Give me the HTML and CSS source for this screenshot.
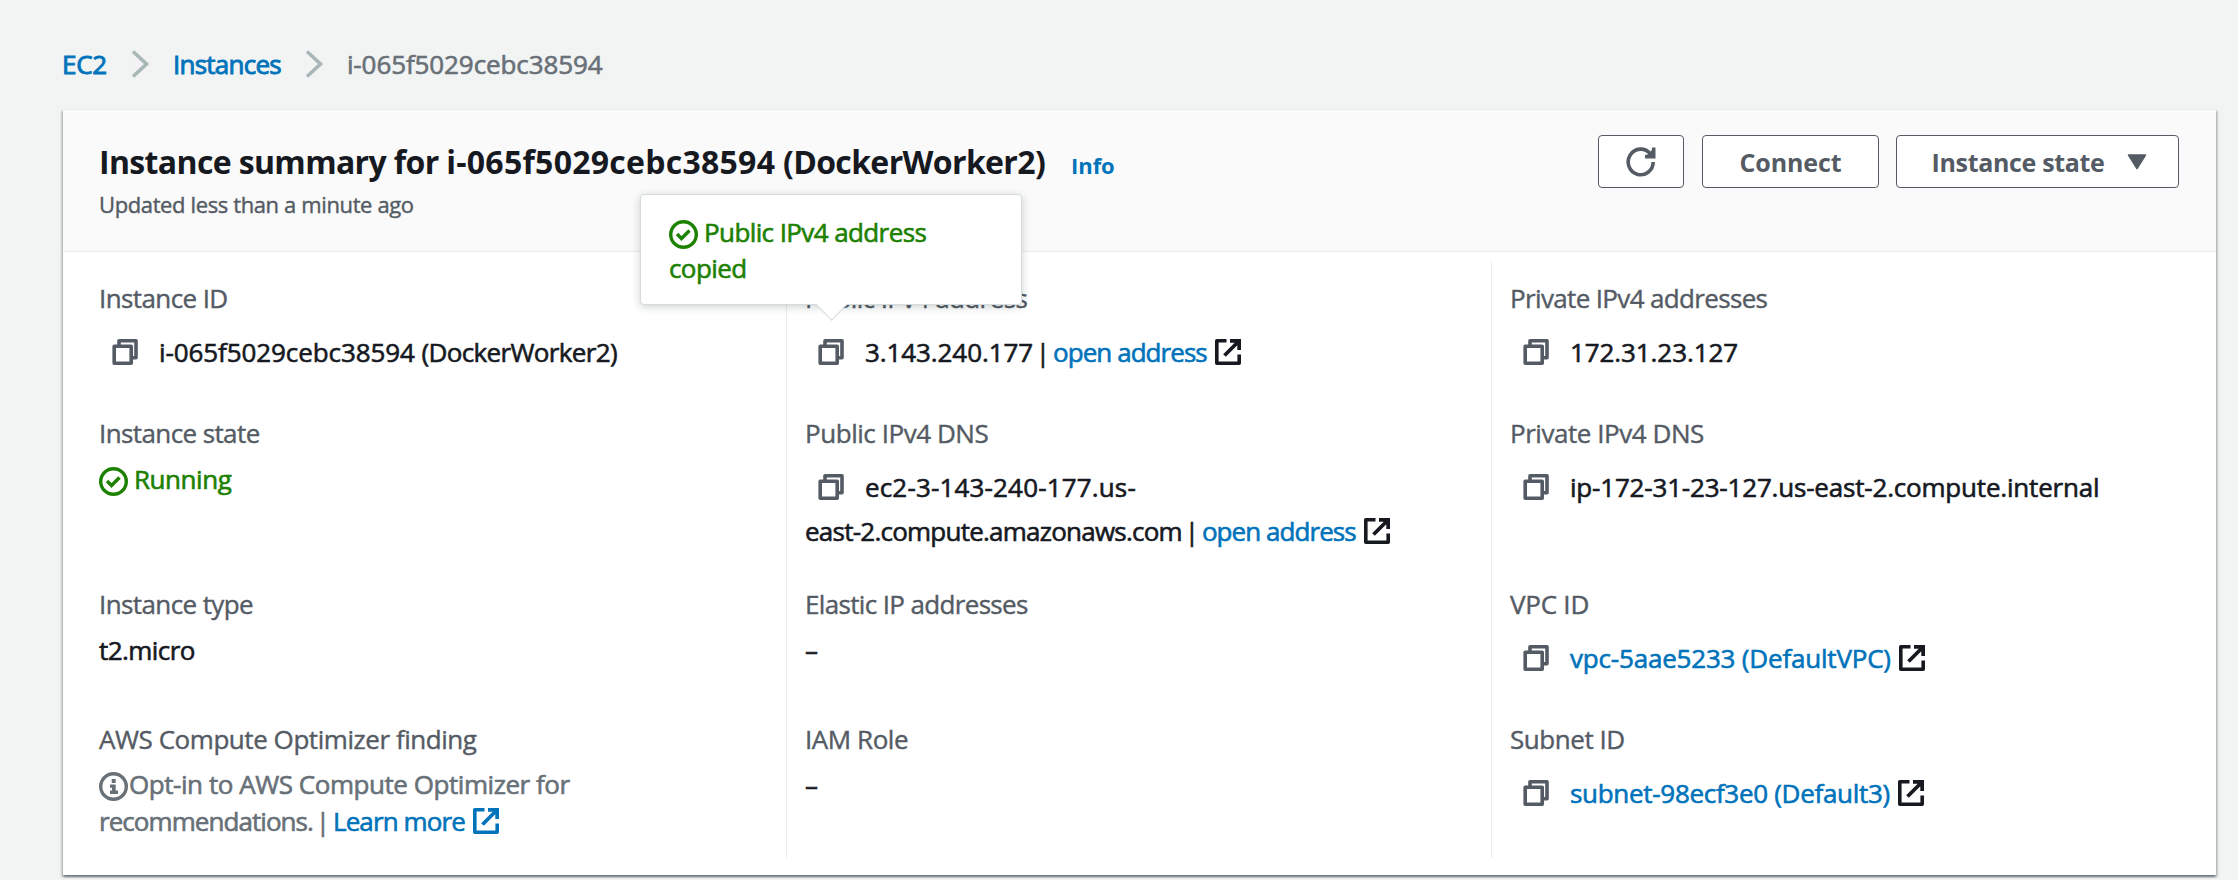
FILE: index.html
```html
<!DOCTYPE html>
<html lang="en">
<head>
<meta charset="utf-8">
<title>Instance summary</title>
<link rel="stylesheet" href="styles.css">
</head>
<body>
<svg class="defs" aria-hidden="true">
  <symbol id="copy" viewBox="0 0 26 26"><path d="M7 6.500V1.800h17v17h-4.500M2.200 7.200h17v17h-17z" fill="none" stroke="currentColor" stroke-width="3.600" stroke-linejoin="round"/></symbol>
  <symbol id="external" viewBox="0 0 26 26"><path d="M11.500 1.800H1.800v22.400h22.400V15.500" fill="none" stroke="currentColor" stroke-width="3.600" stroke-linejoin="round"/><path d="M15 1.800h9.200V11M9.500 16.500 23.500 2.500" fill="none" stroke="currentColor" stroke-width="3.800"/></symbol>
  <symbol id="check" viewBox="0 0 29 29"><circle cx="14.500" cy="14.500" r="12.800" fill="none" stroke="currentColor" stroke-width="3.400"/><path d="M8 14l4.500 4.500 8-8" fill="none" stroke="currentColor" stroke-width="3.400"/></symbol>
  <symbol id="info" viewBox="0 0 29 29"><circle cx="14.500" cy="14.500" r="12.800" fill="none" stroke="currentColor" stroke-width="3.400"/><path d="M12.700 7h4v4h-4zM11 12.500h5.700v6H19v3.500h-8v-3.500h2v-2.700h-2z" fill="currentColor"/></symbol>
  <symbol id="chevron" viewBox="0 0 18 28"><path d="M2 1.500 15.500 14 2 26.500" fill="none" stroke="currentColor" stroke-width="3.600"/></symbol>
</svg>
<nav class="crumbs">
  <a class="ls25">EC2</a><svg class="chev"><use href="#chevron"/></svg><a class="ls75">Instances</a><svg class="chev"><use href="#chevron"/></svg><span>i-065f5029cebc38594</span>
</nav>
<main class="card">
  <header class="head">
    <div class="heading">
      <h1>Instance summary for <span class="title-id">i-065f5029cebc38594</span> (DockerWorker2)<a class="info">Info</a></h1>
      <p class="updated">Updated less than a minute ago</p>
    </div>
    <div class="actions">
      <button class="btn refresh"><svg viewBox="0 0 30 30"><path d="M27.200 15A12.500 12.800 0 1 1 24.200 6.600" fill="none" stroke="currentColor" stroke-width="3.600"/><path d="M27.700.500V9.600H19" fill="none" stroke="currentColor" stroke-width="3.600"/><path d="M27 2v8h-8z" fill="currentColor"/></svg></button>
      <button class="btn connect">Connect</button>
      <button class="btn state">Instance state<svg class="caret" viewBox="0 0 20 16"><path d="M1.500 1h17L10 14.500z" fill="currentColor" stroke="currentColor" stroke-width="1.500" stroke-linejoin="round"/></svg></button>
    </div>
  </header>
  <div class="cols">
    <section class="col">
      <div class="field"><div class="label ls60">Instance ID</div>
        <div class="value copyable"><svg class="copy"><use href="#copy"/></svg><span class="ls10">i-065f5029cebc38594 </span><span class="ls65">(DockerWorker2)</span></div></div>
      <div class="field"><div class="label ls60">Instance state</div>
        <div class="value ok"><svg class="status"><use href="#check"/></svg><span class="after ls45">Running</span></div></div>
      <div class="field"><div class="label ls60">Instance type</div><div class="value ls55">t2.micro</div></div>
      <div class="field"><div class="label ls45">AWS Compute Optimizer finding</div>
        <div class="value muted"><svg class="status"><use href="#info"/></svg><span class="ls45">Opt-in to AWS Compute Optimizer for</span><br><span class="ls95">recommendations.</span><span class="pipe">|</span><a class="ls90">Learn more</a><svg class="ext"><use href="#external"/></svg></div></div>
    </section>
    <section class="col">
      <div class="field"><div class="label ls60">Public IPv4 address</div>
        <div class="value copyable"><svg class="copy"><use href="#copy"/></svg><span class="ls10">3.143.240.177</span><span class="pipe">|</span><a class="ls95">open address</a><svg class="ext"><use href="#external"/></svg></div>
        <div class="tooltip"><svg class="status"><use href="#check"/></svg><span class="after ls60">Public IPv4 address copied</span></div></div>
      <div class="field"><div class="label ls45">Public IPv4 DNS</div>
        <div class="value copyable"><svg class="copy"><use href="#copy"/></svg><span class="wide">ec2-3-143-240-177.us-</span><br><span class="ls75">east-2.compute.amazonaws.com</span><span class="pipe">|</span><a class="ls95">open address</a><svg class="ext"><use href="#external"/></svg></div></div>
      <div class="field"><div class="label ls65">Elastic IP addresses</div><div class="value">–</div></div>
      <div class="field"><div class="label ls45">IAM Role</div><div class="value">–</div></div>
    </section>
    <section class="col">
      <div class="field"><div class="label ls65">Private IPv4 addresses</div>
        <div class="value copyable"><svg class="copy"><use href="#copy"/></svg><span class="ls10">172.31.23.127</span></div></div>
      <div class="field"><div class="label ls45">Private IPv4 DNS</div>
        <div class="value copyable"><svg class="copy"><use href="#copy"/></svg><span class="ls20">ip-172-31-23-127.us-east-2.compute.internal</span></div></div>
      <div class="field"><div class="label ls25">VPC ID</div>
        <div class="value copyable"><svg class="copy"><use href="#copy"/></svg><a class="ls20">vpc-5aae5233 (DefaultVPC)</a><svg class="ext"><use href="#external"/></svg></div></div>
      <div class="field"><div class="label ls45">Subnet ID</div>
        <div class="value copyable"><svg class="copy"><use href="#copy"/></svg><a class="ls30">subnet-98ecf3e0 (Default3)</a><svg class="ext"><use href="#external"/></svg></div></div>
    </section>
  </div>
</main>
</body>
</html>
```
FILE: styles.css
```css
* { box-sizing: border-box; }
body {
  margin: 0;
  height: 880px;
  overflow: hidden;
  background: #f2f3f3;
  color: #16191f;
  font: 400 26px/36px "Open Sans", "Noto Sans", sans-serif;
  -webkit-text-stroke: 0.6px currentColor;
}
.defs { position: absolute; width: 0; height: 0; }
a { color: #0073bb; }
svg { flex: none; }

.crumbs {
  display: flex;
  align-items: center;
  height: 109px;
  padding: 18px 0 0 62px;
  letter-spacing: -.1px;
  color: #687078;
}
.crumbs a { -webkit-text-stroke-width: 0.9px; }
.crumbs .chev { width: 18px; height: 28px; margin: 0 24px 0 24px; color: #aab7b8; }

.card {
  width: 2153px;
  height: 766px;
  margin-left: 63px;
  background: #fff;
  border-top: 1px solid #eaeded;
  box-shadow: 0 2px 2px 0 rgba(0, 28, 36, .4), 2px 2px 2px 0 rgba(0, 28, 36, .15), -2px 2px 2px 0 rgba(0, 28, 36, .15);
}
.head {
  display: flex;
  justify-content: space-between;
  height: 142px;
  padding: 25px 37px 0 36px;
  background: #fafafa;
  border-bottom: 1px solid #eaeded;
}
.heading { white-space: nowrap; }
h1 {
  margin: 4px 0 0;
  font-size: 32px;
  line-height: 46px;
  font-weight: 700;
  letter-spacing: -.64px;
  -webkit-text-stroke-width: 0;
}
.title-id { letter-spacing: .26px; }
.info { margin-left: 26px; font-size: 22px; letter-spacing: -.1px; }
.updated { margin: 0; font-size: 22px; line-height: 32px; letter-spacing: -.38px; color: #545b64; -webkit-text-stroke-width: .4px; }
.actions { display: flex; }
.btn {
  display: flex;
  align-items: center;
  justify-content: center;
  height: 53px;
  padding: 0;
  background: #fff;
  border: 1px solid #545b64;
  border-radius: 4px;
  color: #545b64;
  font: 700 25px/36px "Open Sans", "Noto Sans", sans-serif;
  -webkit-text-stroke-width: 0;
}
.refresh { width: 86px; margin-right: 18px; }
.refresh svg { width: 30px; height: 30px; }
.connect { width: 177px; margin-right: 17px; letter-spacing: -.1px; }
.state { width: 283px; padding-left: 3px; letter-spacing: -.33px; }
.caret { width: 20px; height: 16px; margin-left: 22px; }

.cols { display: grid; grid-template-columns: 723px 705px 1fr; padding-top: 9px; }
.col { height: 597px; padding: 19px 0 0 18px; display: grid; grid-template-rows: 135px 171px 135px 1fr; white-space: nowrap; }
.col:first-child { padding-left: 36px; }
.col + .col { border-left: 1px solid #eaeded; }
.field { position: relative; }
.label { color: #545b64; -webkit-text-stroke-width: .4px; }
.value { margin-top: 10px; line-height: 37px; }
.copyable { margin-top: 14px; line-height: 44px; }
.ok { color: #1d8102; }
.muted { margin-top: 9px; color: #687078; }
.copy { width: 26px; height: 26px; margin: 0 20px 0 13px; vertical-align: -3px; color: #545b64; }
.copy + span, .copy + a { margin-left: 1px; }
.ext { width: 26px; height: 26px; margin-left: 8px; vertical-align: -3px; }
.muted .ext { color: #0073bb; }
.status { width: 29px; height: 29px; margin: -4px 1px -4px 0; vertical-align: -1px; }
.ok .status, .muted .status, .tooltip .status { vertical-align: -4px; position: relative; top: -1px; }
.after { margin-left: 5px; }
.pipe { display: inline-block; width: 20px; text-align: center; }

.tooltip {
  position: absolute;
  left: -165px;
  top: -86px;
  width: 382px;
  height: 111px;
  padding: 19px 60px 0 28px;
  white-space: normal;
  line-height: 36px;
  color: #1d8102;
  background: #fff;
  border: 1px solid #d5dbdb;
  border-radius: 4px;
  box-shadow: 0 2px 8px rgba(0, 28, 36, .2);
}
.tooltip::after {
  content: "";
  position: absolute;
  left: 179px;
  top: 98px;
  width: 22px;
  height: 22px;
  background: linear-gradient(135deg, transparent 50%, #fff 50%);
  border: solid #d5dbdb;
  border-width: 0 1px 1px 0;
  transform: rotate(45deg);
}

.ls10 { letter-spacing: -.09px; }
.ls20 { letter-spacing: -.19px; }
.ls25 { letter-spacing: -.23px; }
.ls30 { letter-spacing: -.3px; }
.ls45 { letter-spacing: -.45px; }
.ls55 { letter-spacing: -.55px; }
.ls60 { letter-spacing: -.6px; }
.ls65 { letter-spacing: -.65px; }
.ls75 { letter-spacing: -.76px; }
.ls90 { letter-spacing: -.89px; }
.ls95 { letter-spacing: -.94px; }
.wide { letter-spacing: .16px; }
```
